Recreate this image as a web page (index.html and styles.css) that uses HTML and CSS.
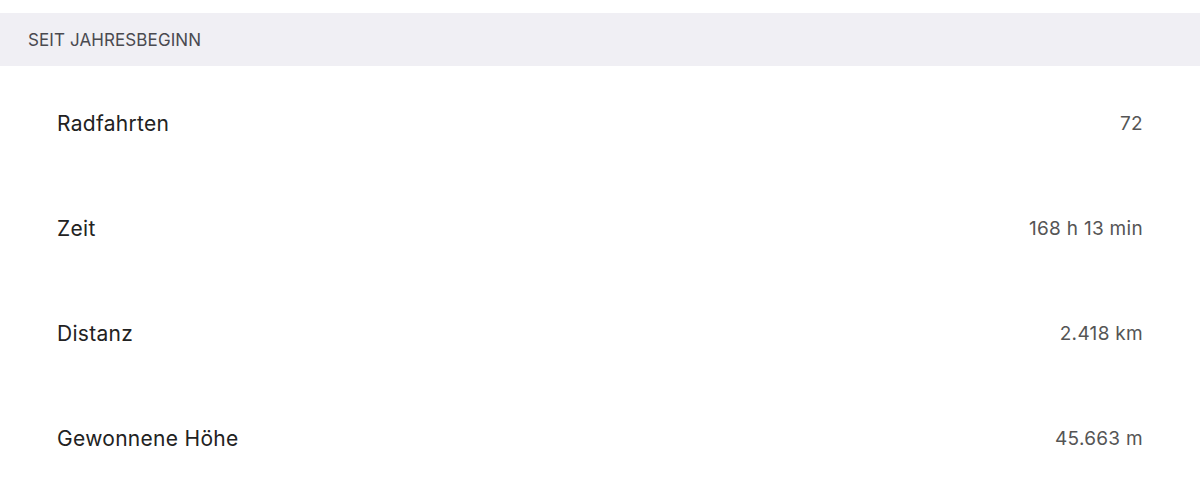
FILE: index.html
```html
<!DOCTYPE html>
<html lang="de">
<head>
  <meta charset="UTF-8" />
  <title>Statistik</title>
  <link rel="stylesheet" href="styles.css">
</head>
<body>
  <section class="stats">
    <h3 class="stats-header">SEIT JAHRESBEGINN</h3>
    <div class="stats-list">
      <div class="stat-row">
        <span class="stat-label">Radfahrten</span>
        <span class="stat-value">72</span>
      </div>
      <div class="stat-row">
        <span class="stat-label">Zeit</span>
        <span class="stat-value">168 h 13 min</span>
      </div>
      <div class="stat-row">
        <span class="stat-label">Distanz</span>
        <span class="stat-value">2.418 km</span>
      </div>
      <div class="stat-row">
        <span class="stat-label">Gewonnene Höhe</span>
        <span class="stat-value">45.663 m</span>
      </div>
    </div>
  </section>
</body>
</html>
```

FILE: styles.css
```css
* {
  box-sizing: border-box;
}

body {
  margin: 0;
  font-family: 'Inter', sans-serif;
  background-color: #ffffff;
  padding-top: 13px;
}

.stats-header {
  margin: 0;
  height: 53px;
  display: flex;
  align-items: center;
  padding: 0 28px;
  background-color: #f0eff4;
  color: #4a4a50;
  font-size: 17px;
  font-weight: 400;
  letter-spacing: 0.1px;
}

.stats-list {
  padding: 5px 57px 0 57px;
}

.stat-row {
  height: 105px;
  display: flex;
  justify-content: space-between;
  align-items: center;
}

.stat-label {
  font-size: 21px;
  color: #222222;
  letter-spacing: 0.3px;
}

.stat-value {
  font-size: 19px;
  color: #555555;
  letter-spacing: 0.3px;
}
```
